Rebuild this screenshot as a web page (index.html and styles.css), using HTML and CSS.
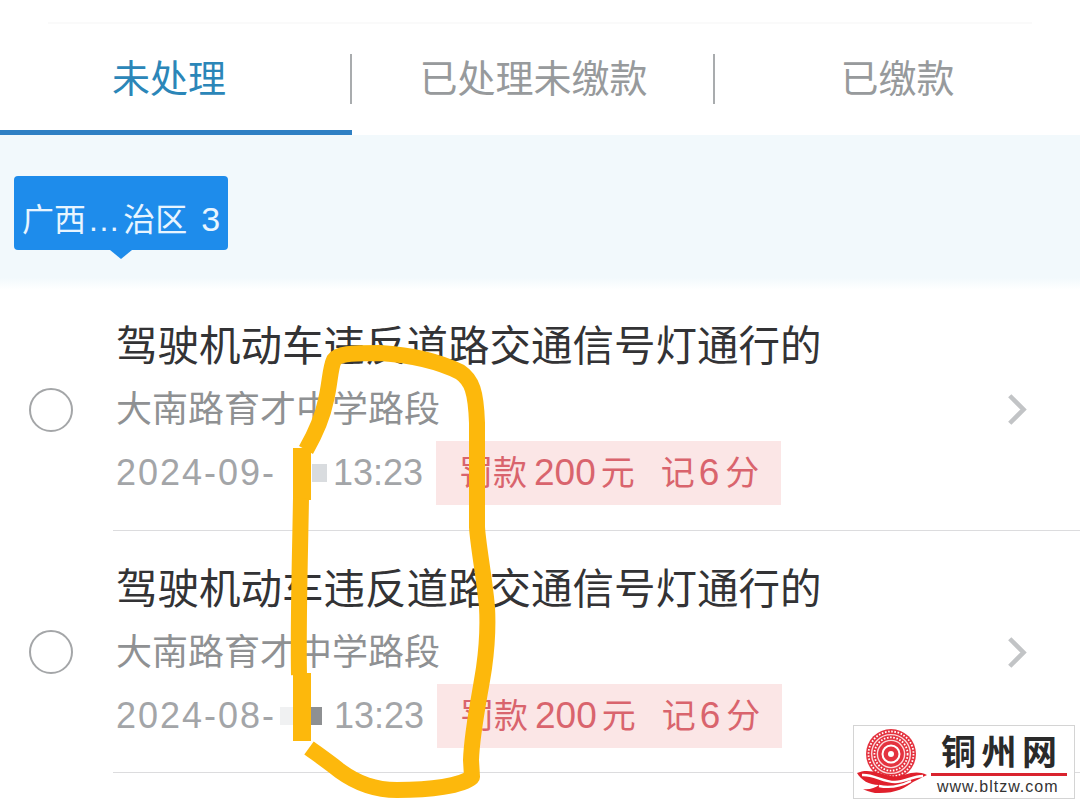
FILE: index.html
```html
<!doctype html>
<html lang="zh-CN">

<head>
    <meta charset="UTF-8">
    <meta name="viewport" content="width=device-width, initial-scale=1.0">
    <title>违法处理</title>
    <link rel="stylesheet" href="styles.css">
</head>

<body>
    <div class="page">
        <div class="tabs">
            <div class="tab active"><span>未处理</span></div>
            <div class="tab"><span>已处理未缴款</span></div>
            <div class="tab"><span>已缴款</span></div>
        </div>

        <div class="filter-band">
            <div class="chip">广西<span class="chip-dots">...</span>治区<span class="chip-count">3</span></div>
        </div>

        <div class="list">
            <div class="row row-first">
                <div class="radio"></div>
                <div class="row-body">
                    <div class="title">驾驶机动车违反道路交通信号灯通行的</div>
                    <div class="place">大南路育才中学路段</div>
                    <div class="meta">
                        <div class="date">
                            <span class="day">2024-09-</span>
                            <i class="blur blur-one"></i>
                            <span class="time">13:23</span>
                        </div>
                        <div class="fine">罚款<span class="amount">200</span>元<span class="points-label">记</span><span class="points">6</span>分</div>
                    </div>
                </div>
                <svg class="chevron" viewBox="0 0 24 36"><path d="M3 3 L18 18 L3 33" /></svg>
            </div>
            <div class="row row-second">
                <div class="radio"></div>
                <div class="row-body">
                    <div class="title">驾驶机动车违反道路交通信号灯通行的</div>
                    <div class="place">大南路育才中学路段</div>
                    <div class="meta">
                        <div class="date">
                            <span class="day">2024-08-</span>
                            <i class="blur blur-two"></i>
                            <span class="time">13:23</span>
                        </div>
                        <div class="fine">罚款<span class="amount">200</span>元<span class="points-label">记</span><span class="points">6</span>分</div>
                    </div>
                </div>
                <svg class="chevron" viewBox="0 0 24 36"><path d="M3 3 L18 18 L3 33" /></svg>
            </div>
        </div>

        <!-- hand drawn marker over the list -->
        <svg class="marker" viewBox="0 0 1080 804">
            <path d="M306 450 C314 436 322 420 326 400 C330 384 330 368 334 360 C338 354 350 353 380 353 C410 355 440 362 460 372 C472 380 476 392 477 423 L477 527 C478 545 484 575 487 607 C488 625 488 640 484 668 C480 695 472 730 471 760 L472 777 C462 786 430 790 397 790 C375 790 358 784 340 771 C330 763 320 756 309 748" />
            <path class="marker-thick" d="M302 448 L302 500" />
            <path d="M301 498 C300 560 298 620 299 675" />
            <path class="marker-thick" d="M302 673 L302 741" />
        </svg>

        <div class="watermark">
            <svg class="wm-logo" viewBox="0 0 73 70">
                <circle class="wm-disc" cx="36" cy="28" r="25" />
                <circle class="wm-dots" cx="36" cy="28" r="22.5" />
                <circle class="wm-gap" cx="36" cy="28" r="19.4" />
                <circle class="wm-dots" cx="36" cy="28" r="16.6" />
                <circle class="wm-gap" cx="36" cy="28" r="13.6" />
                <circle class="wm-core" cx="36" cy="28" r="8.5" />
                <circle class="wm-hole" cx="36" cy="28" r="3" />
                <path class="wm-wave" d="M2 47 C12 42 24 47 36 50 C48 52 58 42 72 49 C66 52 62 54 58 56 C50 62 40 68 20 67 C14 66 10 64 8 63 C14 64 20 62 24 59 C14 59 6 54 2 47 Z" />
                <path class="wm-stripe" d="M7 49 C18 48 28 56 40 56 C50 56 58 50 68 50" />
                <path class="wm-stripe" d="M24 60 C34 62 46 60 56 55" />
            </svg>
            <div class="wm-text">
                <div class="wm-name">铜州网</div>
                <div class="wm-url">www.bltzw.com</div>
            </div>
        </div>
    </div>
</body>

</html>
```

FILE: styles.css
```css
body {
    margin: 0;
    background: #fff;
    font-family: "Liberation Sans", "Noto Sans CJK SC", sans-serif;
}

.page {
    position: relative;
    width: 1080px;
    height: 804px;
    overflow: hidden;
}

.tabs {
    display: grid;
    grid-template-columns: 352px 363px 365px;
    height: 135px;
    background-image: linear-gradient(#fafafa, #fafafa);
    background-size: 984px 2px;
    background-position: 48px 22px;
    background-repeat: no-repeat;
}

.tab {
    height: 130px;
    display: flex;
    align-items: center;
    justify-content: center;
    font-size: 38px;
    color: #979a9c;
    background-image: linear-gradient(#a9acae, #a9acae);
    background-size: 2px 50px;
    background-position: right 0 top 54px;
    background-repeat: no-repeat;
}

.tab span {
    margin-top: 20px;
}

.tab:last-child {
    background: none;
}

.tab.active {
    color: #2b86b8;
    height: 135px;
    box-sizing: border-box;
    padding-right: 14px;
    border-bottom: 5px solid #2f80c4;
}

.filter-band {
    height: 155px;
    background: linear-gradient(#f2f9fc 92%, #fff);
    padding: 41px 0 0 14px;
    box-sizing: border-box;
}

.chip {
    position: relative;
    width: 214px;
    height: 74px;
    box-sizing: border-box;
    padding: 23px 0 0 8px;
    background: #1e8ceb;
    border-radius: 4px;
    color: #e8f5ff;
    font-size: 32px;
    line-height: 40px;
    white-space: nowrap;
}

.chip::after {
    content: "";
    position: absolute;
    left: 96px;
    bottom: -9px;
    width: 0;
    height: 0;
    border-left: 11px solid transparent;
    border-right: 11px solid transparent;
    border-top: 9px solid #1e8ceb;
}

.chip-dots {
    margin: 0 3px 0 3px;
    letter-spacing: 1.5px;
}

.chip-count {
    font-size: 34px;
    margin-left: 14px;
}

.row {
    display: flex;
    align-items: center;
    box-sizing: border-box;
    padding-left: 29px;
    padding-right: 51px;
    position: relative;
}

.row-first {
    height: 241px;
    padding-bottom: 2px;
}

.row-second {
    height: 242px;
}

.row::after {
    content: "";
    position: absolute;
    left: 113px;
    right: 0;
    bottom: 0;
    height: 1px;
    background: #dcdcde;
}

.radio {
    width: 40px;
    height: 40px;
    border: 2px solid #a4a6a8;
    border-radius: 50%;
    flex-shrink: 0;
}

.row-body {
    flex: 1;
    margin-left: 43px;
    padding-top: 6px;
}

.row-second .row-body {
    padding-top: 8px;
}

.title {
    font-size: 41.5px;
    line-height: 52px;
    color: #333335;
    white-space: nowrap;
}

.place {
    font-size: 36px;
    line-height: 44px;
    color: #8f9193;
    margin-top: 15px;
    white-space: nowrap;
}

.meta {
    display: flex;
    align-items: center;
    margin-top: 9px;
}

.date {
    font-size: 36px;
    color: #a3a5a8;
    white-space: nowrap;
    width: 320px;
    display: flex;
    align-items: center;
}

.row-second .date {
    width: 321px;
}

.day {
    width: 164px;
    letter-spacing: 2px;
}

.blur {
    display: block;
    height: 18px;
}

.blur-one {
    width: 47px;
    margin-right: 6px;
    background: linear-gradient(90deg, #fff 0 68%, #d9dcdf 68%);
}

.blur-two {
    width: 42px;
    margin-right: 12px;
    background: linear-gradient(90deg, #f0f1f2 0 50%, #fff 50% 72%, #8e9092 72%);
}

.fine {
    box-sizing: border-box;
    width: 345px;
    background: #fbe6e6;
    color: #d9646d;
    font-size: 34px;
    height: 64px;
    line-height: 64px;
    padding-left: 23px;
    white-space: nowrap;
}

.amount,
.points {
    font-size: 37px;
}

.amount {
    margin: 0 5px 0 7px;
}

.points-label {
    margin-left: 26px;
}

.points {
    margin: 0 6px 0 4px;
}

.chevron {
    width: 22px;
    height: 33px;
    flex-shrink: 0;
}

.chevron path {
    fill: none;
    stroke: #c2c4c6;
    stroke-width: 5;
}

.marker {
    position: absolute;
    left: 0;
    top: 0;
    width: 1080px;
    height: 804px;
}

.marker path {
    fill: none;
    stroke: #fdb80c;
    stroke-width: 16;
    stroke-linejoin: round;
}

.marker .marker-thick {
    stroke-width: 18;
}

.watermark {
    position: absolute;
    left: 853px;
    top: 725px;
    width: 222px;
    height: 74px;
    box-sizing: border-box;
    background: #fff;
    border: 1px solid #d4d4d4;
    display: flex;
    align-items: flex-start;
    padding-left: 1px;
}

.wm-logo {
    width: 73px;
    height: 70px;
    flex-shrink: 0;
}

.wm-disc {
    fill: #e4333f;
}

.wm-dots {
    fill: none;
    stroke: #fff;
    stroke-width: 1.8;
    stroke-dasharray: 1.6 1.6;
}

.wm-gap {
    fill: none;
    stroke: #fbd9db;
    stroke-width: 1.4;
}

.wm-core {
    fill: #e4333f;
    stroke: #fff;
    stroke-width: 2;
}

.wm-hole {
    fill: #fff;
}

.wm-wave {
    fill: #e0202c;
}

.wm-stripe {
    fill: none;
    stroke: #fff;
    stroke-width: 2.4;
}

.wm-text {
    width: 136px;
    margin-left: 3px;
}

.wm-name {
    font-family: "Noto Sans CJK SC", sans-serif;
    font-weight: 700;
    font-size: 35px;
    line-height: 47px;
    letter-spacing: 5.5px;
    padding-left: 10px;
    color: #2a2a2a;
    border-bottom: 3px solid #d9232e;
}

.wm-url {
    font-size: 16px;
    line-height: 21px;
    letter-spacing: 1px;
    padding-left: 6px;
    color: #333;
}
```
